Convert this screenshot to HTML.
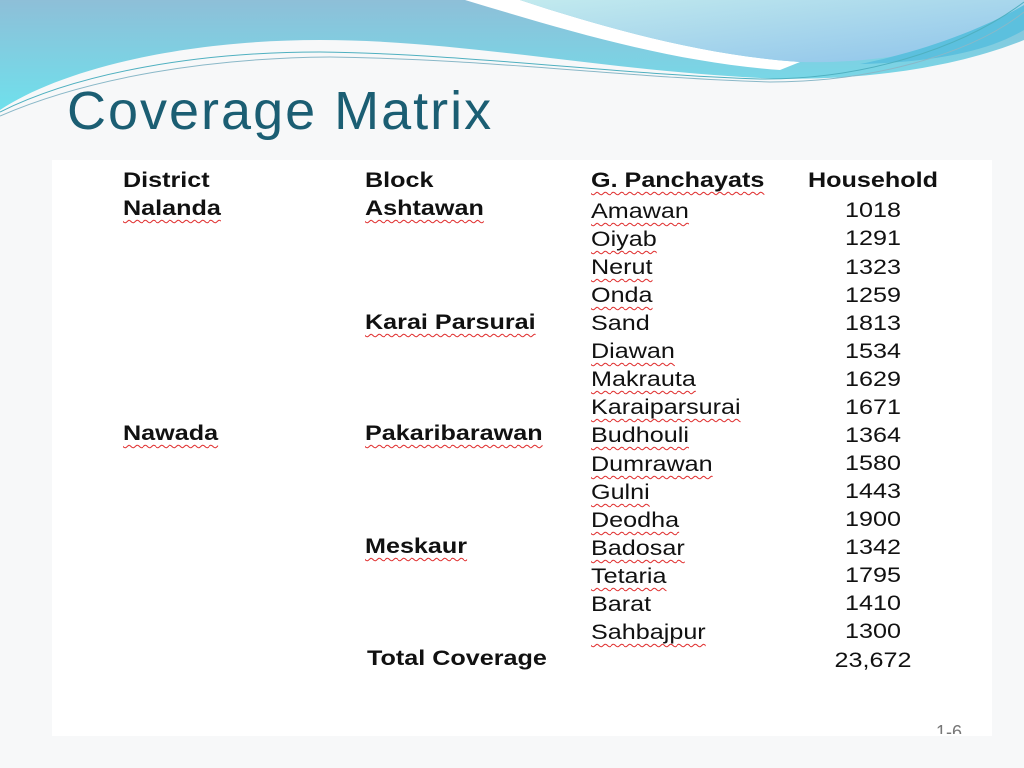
<!DOCTYPE html>
<html><head><meta charset="utf-8"><style>
body{margin:0;width:1024px;height:768px;overflow:hidden;background:#f7f8f9;position:relative;font-family:"Liberation Sans",Arial,sans-serif}
svg.bg{position:absolute;left:0;top:0}
.title{position:absolute;left:67px;top:80px;font-size:54px;color:#1b5e73;letter-spacing:2px;white-space:nowrap}
.box{position:absolute;left:52px;top:160px;width:940px;height:576px;background:#fff}
.t{position:absolute;font-size:21.5px;color:#111;white-space:nowrap;line-height:24px;transform:scaleX(1.17);transform-origin:left top}
.b{font-weight:bold}
.u{text-decoration:underline wavy #e03030;text-decoration-thickness:1px;text-underline-offset:4px}
.n{width:110px;text-align:center;transform-origin:center top}
</style></head><body>
<svg class="bg" width="1024" height="160" viewBox="0 0 1024 160">
<defs>
<linearGradient id="g2" x1="0" y1="0" x2="0" y2="1"><stop offset="0" stop-color="#8ebfd8"/><stop offset="1" stop-color="#6fe0ec"/></linearGradient>
<linearGradient id="g3" x1="0" y1="0" x2="1" y2="1"><stop offset="0" stop-color="#c2eaee"/><stop offset="1" stop-color="#8ec3ea"/></linearGradient>
</defs>
<path d="M0 0 H1024 V40 C950 70 850 82 760 78 C600 70 460 40 320 40 C180 40 60 70 0 110 Z" fill="url(#g2)"/>
<path d="M465 0 H520 C610 30 710 56 800 62 L780 70 C670 62 565 30 465 0 Z" fill="#ffffff"/>
<path d="M520 0 H1024 V15 C970 45 890 64 800 62 C710 56 610 30 520 0 Z" fill="url(#g3)"/>
<path d="M860 64 C930 50 990 25 1024 5 V30 C990 50 940 62 860 64 Z" fill="#5cc0de"/>
<path d="M0 112 C80 72 200 52 320 52 C470 54 610 74 760 79 C860 80 960 50 1024 2" stroke="#4fb0c0" stroke-width="1" fill="none"/>
<path d="M0 116 C90 77 210 58 330 57 C490 59 630 78 770 82 C870 82 970 55 1024 12" stroke="#8ab8c8" stroke-width="1" fill="none"/>
</svg>
<div class="title">Coverage Matrix</div>
<div class="box"></div>

<div class="t b" style="left:123px;top:168px">District</div>
<div class="t b" style="left:365px;top:168px">Block</div>
<div class="t b" style="left:591px;top:168px"><span class="u">G. Panchayats</span></div>
<div class="t b" style="left:808px;top:168px">Household</div>

<div class="t b u" style="left:123px;top:196px">Nalanda</div>
<div class="t b u" style="left:365px;top:196px">Ashtawan</div>
<div class="t b u" style="left:365px;top:310px">Karai Parsurai</div>
<div class="t b u" style="left:123px;top:421px">Nawada</div>
<div class="t b u" style="left:365px;top:421px">Pakaribarawan</div>
<div class="t b u" style="left:365px;top:534px">Meskaur</div>
<div class="t b" style="left:367px;top:646px">Total Coverage</div>

<div class="t u" style="left:591px;top:199px">Amawan</div><div class="t n" style="left:818px;top:198px">1018</div>
<div class="t u" style="left:591px;top:227px">Oiyab</div><div class="t n" style="left:818px;top:226px">1291</div>
<div class="t u" style="left:591px;top:255px">Nerut</div><div class="t n" style="left:818px;top:255px">1323</div>
<div class="t u" style="left:591px;top:283px">Onda</div><div class="t n" style="left:818px;top:283px">1259</div>
<div class="t" style="left:591px;top:311px">Sand</div><div class="t n" style="left:818px;top:311px">1813</div>
<div class="t u" style="left:591px;top:339px">Diawan</div><div class="t n" style="left:818px;top:339px">1534</div>
<div class="t u" style="left:591px;top:367px">Makrauta</div><div class="t n" style="left:818px;top:367px">1629</div>
<div class="t u" style="left:591px;top:395px">Karaiparsurai</div><div class="t n" style="left:818px;top:395px">1671</div>
<div class="t u" style="left:591px;top:423px">Budhouli</div><div class="t n" style="left:818px;top:423px">1364</div>
<div class="t u" style="left:591px;top:452px">Dumrawan</div><div class="t n" style="left:818px;top:451px">1580</div>
<div class="t u" style="left:591px;top:480px">Gulni</div><div class="t n" style="left:818px;top:479px">1443</div>
<div class="t u" style="left:591px;top:508px">Deodha</div><div class="t n" style="left:818px;top:507px">1900</div>
<div class="t u" style="left:591px;top:536px">Badosar</div><div class="t n" style="left:818px;top:535px">1342</div>
<div class="t u" style="left:591px;top:564px">Tetaria</div><div class="t n" style="left:818px;top:563px">1795</div>
<div class="t" style="left:591px;top:592px">Barat</div><div class="t n" style="left:818px;top:591px">1410</div>
<div class="t u" style="left:591px;top:620px">Sahbajpur</div><div class="t n" style="left:818px;top:619px">1300</div>
<div class="t n" style="left:818px;top:648px">23,672</div>
<div class="t" style="left:936px;top:720px;font-size:18px;color:#777;height:14px;overflow:hidden;transform:none">1-6</div>
</body></html>
